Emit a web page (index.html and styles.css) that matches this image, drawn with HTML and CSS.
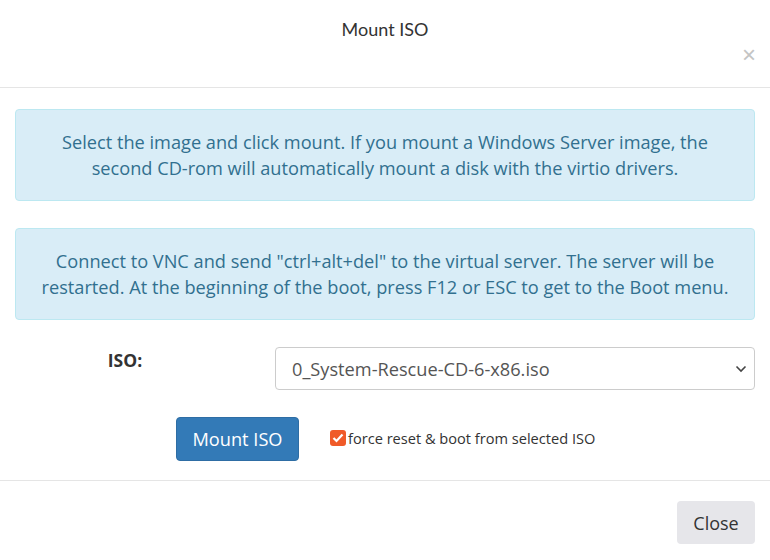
FILE: index.html
```html
<!DOCTYPE html>
<html lang="en">
<head>
    <meta charset="UTF-8">
    <title>Mount ISO</title>
    <link rel="stylesheet" href="styles.css">
</head>
<body>
    <div class="modal">
        <div class="modal-header">
            <h4 class="modal-title">Mount ISO</h4>
            <div class="close-row"><button class="close" type="button">&times;</button></div>
        </div>

        <div class="modal-body">
            <div class="alert">Select the image and click mount. If you mount a Windows Server image, the second CD-rom will automatically mount a disk with the virtio drivers.</div>
            <div class="alert">Connect to VNC and send "ctrl+alt+del" to the virtual server. The server will be restarted. At the beginning of the boot, press F12 or ESC to get to the Boot menu.</div>

            <div class="form-row">
                <label class="iso-label">ISO:</label>
                <div class="select-wrap">
                    <select class="form-control">
                        <option>0_System-Rescue-CD-6-x86.iso</option>
                    </select>
                    <svg class="chevron" width="12" height="8" viewBox="0 0 12 8"><path d="M1.5 1.5 L6 6 L10.5 1.5" fill="none" stroke="#444" stroke-width="1.6"/></svg>
                </div>
            </div>

            <div class="action-row">
                <button class="btn btn-primary" type="button">Mount ISO</button>
                <label class="check">
                    <span class="check-box"><svg width="12" height="10" viewBox="0 0 12 10"><path d="M1.5 5 L4.5 8 L10.5 1.5" fill="none" stroke="#fff" stroke-width="2.2"/></svg></span>
                    force reset &amp; boot from selected ISO
                </label>
            </div>
        </div>

        <div class="modal-footer">
            <button class="btn btn-default" type="button">Close</button>
        </div>
    </div>
</body>
</html>
```

FILE: styles.css
```css
body {
    margin: 0;
    padding: 0;
    font-family: 'Open Sans', 'Noto Sans', sans-serif;
    background-color: #fff;
    color: #333;
}
.modal {
    width: 770px;
    height: 560px;
    display: flex;
    flex-direction: column;
}
.modal-header {
    height: 88px;
    border-bottom: 1px solid #e5e5e5;
    box-sizing: border-box;
    padding: 18px 13px 0 15px;
}
.modal-title {
    margin: 0;
    text-align: center;
    font-family: 'Lato', sans-serif;
    font-weight: normal;
    font-size: 18px;
    line-height: 22px;
    color: #333;
    padding-right: 2px;
}
.close-row {
    display: flex;
    justify-content: flex-end;
    margin-top: 2px;
}
.close {
    background: none;
    border: none;
    padding: 0 1px;
    font-family: 'Liberation Sans', sans-serif;
    font-size: 24px;
    line-height: 26px;
    color: #c4c4c4;
    cursor: pointer;
}
.modal-body {
    padding: 21px 15px 0;
    height: 393px;
    box-sizing: border-box;
    border-bottom: 1px solid #e5e5e5;
}
.alert {
    background-color: #d9edf7;
    border: 1px solid #bce8f1;
    border-radius: 4px;
    color: #31708f;
    text-align: center;
    font-size: 18.2px;
    line-height: 26px;
    padding: 19px 15px;
    margin-bottom: 27px;
}
.form-row {
    display: grid;
    grid-template-columns: 220px 1fr;
    column-gap: 40px;
    margin-top: 27px;
}
.iso-label {
    text-align: center;
    font-weight: bold;
    font-size: 17.5px;
    padding-top: 1px;
}
.select-wrap {
    position: relative;
}
.form-control {
    appearance: none;
    -webkit-appearance: none;
    width: 100%;
    height: 43px;
    border: 1px solid #ccc;
    border-radius: 4px;
    background: #fff;
    padding: 0 16px;
    font-family: 'Open Sans', sans-serif;
    font-size: 18.2px;
    color: #555;
}
.chevron {
    position: absolute;
    right: 8px;
    top: 18px;
}
.action-row {
    display: flex;
    align-items: center;
    margin-top: 27px;
    padding-left: 161px;
}
.btn {
    font-family: 'Open Sans', sans-serif;
    font-size: 18.2px;
    border-radius: 4px;
    cursor: pointer;
    height: 44px;
    padding: 0;
    white-space: nowrap;
}
.btn-primary {
    background-color: #337ab7;
    border: 1px solid #2e6da4;
    color: #fff;
    width: 123px;
}
.check {
    display: flex;
    align-items: center;
    margin-left: 31px;
    font-size: 14.6px;
    color: #333;
    margin-top: -2px;
}
.check-box {
    width: 16px;
    height: 16px;
    border-radius: 3px;
    background-color: #f05a28;
    display: flex;
    align-items: center;
    justify-content: center;
    margin-right: 2px;
}
.modal-footer {
    display: flex;
    justify-content: flex-end;
    padding: 20px 15px 0;
}
.btn-default {
    background-color: #e6e6ea;
    border: none;
    color: #333;
    width: 78px;
    height: 43px;
    font-size: 18px;
}
```
